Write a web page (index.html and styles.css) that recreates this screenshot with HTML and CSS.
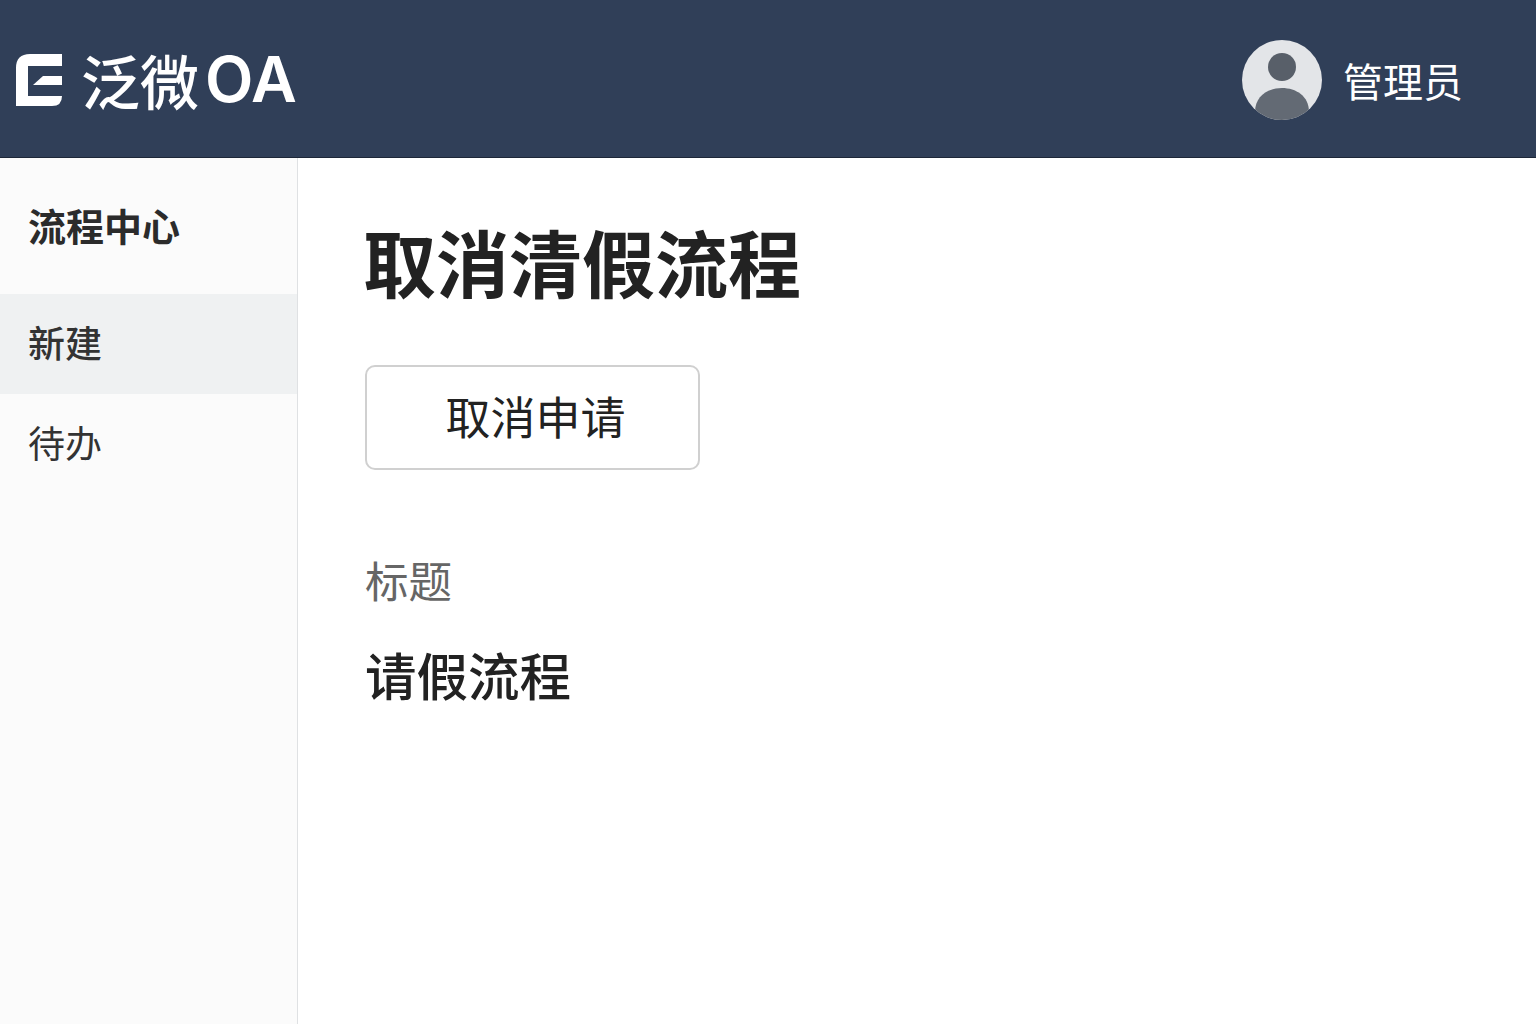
FILE: index.html
```html
<!DOCTYPE html>
<html lang="zh-CN">
<head>
    <meta charset="UTF-8">
    <meta name="viewport" content="width=device-width, initial-scale=1.0">
    <title>泛微OA</title>
    <link rel="stylesheet" href="styles.css">
</head>
<body>
    <header class="topbar">
        <div class="brand">
            <svg class="brand-logo" viewBox="0 0 46 52" aria-hidden="true">
                <path d="M14 0H46V12H12V42H46V42Q46 52 36 52H0V14Q0 0 14 0Z" fill="#fff"/>
                <path d="M17 31L27 22H46V31Z" fill="#fff"/>
            </svg>
            <span class="brand-name">泛微</span>
            <span class="brand-oa">OA</span>
        </div>
        <div class="user">
            <svg class="avatar" viewBox="0 0 80 80" aria-hidden="true">
                <defs><clipPath id="avatar-clip"><circle cx="40" cy="40" r="40"/></clipPath></defs>
                <circle cx="40" cy="40" r="40" fill="#e3e5e8"/>
                <circle cx="40" cy="27" r="14" fill="#585f69"/>
                <path d="M13 72C13 56 26 48 40 48S67 56 67 72V80H13Z" fill="#636a74" clip-path="url(#avatar-clip)"/>
            </svg>
            <span class="user-name">管理员</span>
        </div>
    </header>

    <div class="layout">
        <aside class="sidebar">
            <h2 class="sidebar-title">流程中心</h2>
            <nav>
                <a class="nav-item nav-item-active">新建</a>
                <a class="nav-item">待办</a>
            </nav>
        </aside>

        <main class="content">
            <h1 class="page-title">取消清假流程</h1>
            <button class="cancel-btn">取消申请</button>
            <div class="field-label">标题</div>
            <div class="field-value">请假流程</div>
        </main>
    </div>
</body>
</html>
```

FILE: styles.css
```css
body {
    margin: 0;
    height: 1024px;
    overflow: hidden;
    background: #fff;
    font-family: "Noto Sans CJK SC", "Noto Sans", sans-serif;
    color: #222;
}
.topbar {
    height: 155px;
    background: #303f58;
    border-bottom: 1px solid #1d2738;
    display: flex;
    align-items: center;
    justify-content: space-between;
    padding: 2px 73px 0 16px;
    color: #fff;
}
.brand {
    display: flex;
    align-items: center;
}
.brand-logo {
    width: 46px;
    height: 52px;
    margin-right: 19px;
}
.brand-name {
    font-size: 59px;
    font-weight: 500;
    line-height: 1;
}
.brand-oa {
    font-family: "Inter", "Noto Sans", sans-serif;
    font-size: 63px;
    font-weight: 600;
    line-height: 1;
    margin-left: 6px;
}
.user {
    display: flex;
    align-items: center;
    gap: 21px;
}
.avatar {
    width: 80px;
    height: 80px;
}
.user-name {
    font-size: 40px;
    line-height: 1;
}
.layout {
    display: flex;
    height: 866px;
}
.sidebar {
    width: 297px;
    flex-shrink: 0;
    background: #fbfbfb;
    border-right: 1px solid #dfe1e3;
}
.sidebar-title {
    margin: 0;
    height: 136px;
    padding: 0 28px 4px;
    display: flex;
    align-items: center;
    font-size: 38px;
    font-weight: 700;
    color: #2b2b2b;
    box-sizing: border-box;
}
.nav-item {
    display: flex;
    align-items: center;
    height: 100px;
    padding: 0 28px 4px;
    box-sizing: border-box;
    font-size: 37px;
    color: #333;
}
.nav-item-active {
    background: #eff1f2;
    font-weight: 500;
}
.content {
    flex: 1;
    padding: 0 67px;
}
.page-title {
    margin: 60px 0 0 -2px;
    font-size: 73px;
    font-weight: 700;
    line-height: 84px;
    color: #222;
}
.cancel-btn {
    display: block;
    margin-top: 63px;
    width: 335px;
    height: 105px;
    padding: 0 0 4px 6px;
    background: #fff;
    border: 2px solid #d0d0d0;
    border-radius: 10px;
    font-family: inherit;
    font-size: 45px;
    color: #222;
}
.field-label {
    margin-top: 80px;
    font-size: 43.5px;
    line-height: 60px;
    color: #666;
}
.field-value {
    margin-top: 29px;
    font-size: 51.5px;
    font-weight: 500;
    line-height: 70px;
    color: #222;
}
```
